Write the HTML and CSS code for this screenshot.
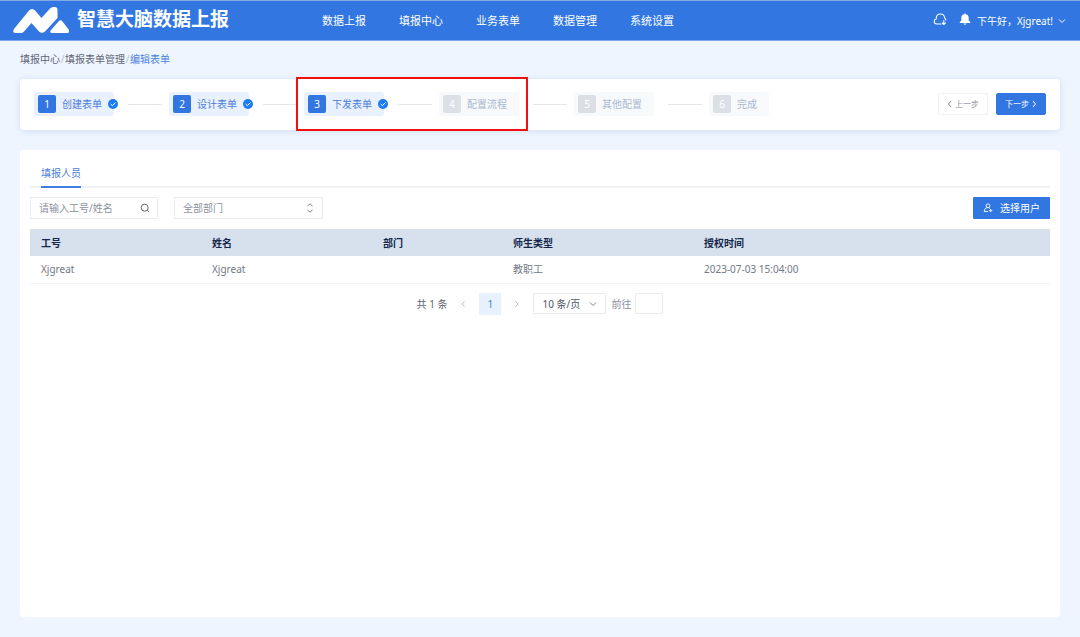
FILE: index.html
```html
<!DOCTYPE html>
<html lang="zh-CN">
<head>
<meta charset="utf-8">
<meta name="viewport" content="width=device-width, initial-scale=1">
<title>智慧大脑数据上报</title>
<link rel="stylesheet" href="styles.css">
</head>
<body>
<header class="header">
  <a class="brand" href="#">
    <svg class="brand-mark" viewBox="0 0 56 26" aria-hidden="true">
      <path d="M1 22 16 3.500Q19 .5 22 3.500L28.500 11 37 1.500Q38.500 0 40 0H42Q44.500 0 44.500 3V11L32 24.500Q29 27 26 24.500L18.500 16 11 24.500Q9.500 26 8 26H2Q-1 26 1 22Z" fill="#fff"/>
      <path d="M45.500 14.500Q47.500 12 49.500 14.500L56 23Q57 26 54 26H39Q36 26 38 23Z" fill="#fff"/>
    </svg>
    <span class="brand-name">智慧大脑数据上报</span>
  </a>
  <nav class="nav">
    <a href="#">数据上报</a>
    <a href="#">填报中心</a>
    <a href="#">业务表单</a>
    <a href="#">数据管理</a>
    <a href="#">系统设置</a>
  </nav>
  <div class="tools">
    <button class="tool glyph" type="button" aria-label="下载">
      <svg class="icon-cloud" viewBox="0 0 14 14" fill="none" stroke="#fff" stroke-width="1.100" stroke-linecap="round" stroke-linejoin="round" aria-hidden="true"><path d="M8 12H4Q1.200 12 1.200 9.500 1.200 7.500 3.200 7 3 2 7.500 2 11.300 2 11.800 6.200 12.600 6.800 12.800 8"/><path d="M10.800 8.500v4M9.300 11l1.500 1.500 1.500-1.500"/></svg>
    </button>
    <button class="tool glyph" type="button" aria-label="通知">
      <svg class="icon-bell" viewBox="0 0 12 12" fill="#fff" aria-hidden="true"><path d="M5.300 1.200V.5h1.400v.7C9 1.600 9.700 3 9.700 5v2.500L11.200 9v.9H.8V9L2.300 7.500V5C2.300 3 3 1.600 5.300 1.200ZM4.600 10.500h2.800Q7.200 11.700 6 11.700T4.600 10.500Z"/></svg>
    </button>
    <button class="tool user" type="button">
      <span>下午好，Xjgreat!</span>
      <svg class="icon-small" viewBox="0 0 8 8" fill="none" stroke="#fff" aria-hidden="true"><path d="M1 2.500 4 5.500 7 2.500"/></svg>
    </button>
  </div>
</header>

<nav class="crumbs" aria-label="面包屑">
  <a href="#">填报中心</a><span class="slash">/</span><a href="#">填报表单管理</a><span class="slash">/</span><a class="current" href="#">编辑表单</a>
</nav>

<main class="main">
  <section class="card wizard">
    <ol class="steps">
      <li class="step done"><span class="num">1</span><span>创建表单</span><svg class="check" viewBox="0 0 10 10" aria-hidden="true"><circle cx="5" cy="5" r="5" fill="#1b7cf5"/><path d="M2.700 5.100 4.400 6.700 7.500 3.600" fill="none" stroke="#fff"/></svg></li>
      <li class="step done"><span class="num">2</span><span>设计表单</span><svg class="check" viewBox="0 0 10 10" aria-hidden="true"><circle cx="5" cy="5" r="5" fill="#1b7cf5"/><path d="M2.700 5.100 4.400 6.700 7.500 3.600" fill="none" stroke="#fff"/></svg></li>
      <li class="step done"><span class="num">3</span><span>下发表单</span><svg class="check" viewBox="0 0 10 10" aria-hidden="true"><circle cx="5" cy="5" r="5" fill="#1b7cf5"/><path d="M2.700 5.100 4.400 6.700 7.500 3.600" fill="none" stroke="#fff"/></svg></li>
      <li class="step"><span class="num">4</span><span>配置流程</span></li>
      <li class="step"><span class="num">5</span><span>其他配置</span></li>
      <li class="step"><span class="num">6</span><span>完成</span></li>
    </ol>
    <div class="wizard-actions">
      <button class="btn" type="button"><svg class="icon-tiny" viewBox="0 0 6 8" fill="none" stroke="currentColor" aria-hidden="true"><path d="M4 1 1.500 4 4 7"/></svg>上一步</button>
      <button class="btn primary" type="button">下一步<svg class="icon-tiny" viewBox="0 0 6 8" fill="none" stroke="currentColor" aria-hidden="true"><path d="M2 1 4.500 4 2 7"/></svg></button>
    </div>
    <div class="highlight"></div>
  </section>

  <section class="card panel">
    <div class="tabs"><button class="tab" type="button">填报人员</button></div>
    <div class="filters">
      <div class="field search">
        <input class="control" type="text" placeholder="请输入工号/姓名" aria-label="请输入工号/姓名">
        <svg class="field-icon" viewBox="0 0 10 10" fill="none" stroke="#606672" aria-hidden="true"><circle cx="4.700" cy="4.700" r="3.500"/><path d="M7.200 7.200 9 9"/></svg>
      </div>
      <div class="field dept">
        <select class="control" aria-label="部门"><option>全部部门</option></select>
        <svg class="field-icon" viewBox="0 0 10 10" fill="none" stroke="#7c828e" aria-hidden="true"><path d="M2.500 3 5 .8 7.500 3M2.500 7 5 9.200 7.500 7"/></svg>
      </div>
      <button class="pick" type="button">
        <svg class="icon-user" viewBox="0 0 10 10" fill="none" stroke="#fff" stroke-width=".9" aria-hidden="true"><circle cx="5" cy="2.800" r="1.900"/><path d="M3.800 4.700Q1.200 5.500 1.200 8.500H5M5.700 5Q6.500 5.200 7 5.700M7.700 6v3.200M6.100 7.600h3.200"/></svg>
        选择用户
      </button>
    </div>
    <table class="table">
      <colgroup><col class="c1"><col class="c1"><col class="c2"><col class="c3"><col></colgroup>
      <thead><tr><th>工号</th><th>姓名</th><th>部门</th><th>师生类型</th><th>授权时间</th></tr></thead>
      <tbody><tr><td>Xjgreat</td><td>Xjgreat</td><td></td><td>教职工</td><td>2023-07-03 15:04:00</td></tr></tbody>
    </table>
    <div class="pager">
      <span class="total">共 1 条</span>
      <button class="page" type="button" aria-label="上一页" disabled><svg class="icon-tiny" viewBox="0 0 6 8" fill="none" stroke="#b5bac4" aria-hidden="true"><path d="M4.500 1.500 2 4 4.500 6.500"/></svg></button>
      <button class="page active" type="button">1</button>
      <button class="page" type="button" aria-label="下一页" disabled><svg class="icon-tiny" viewBox="0 0 6 8" fill="none" stroke="#b5bac4" aria-hidden="true"><path d="M1.500 1.500 4 4 1.500 6.500"/></svg></button>
      <div class="field size">
        <select class="control" aria-label="每页条数"><option>10 条/页</option></select>
        <svg class="field-icon" viewBox="0 0 10 10" fill="none" stroke="#7c828e" aria-hidden="true"><path d="M2 3.500 5 6.500 8 3.500"/></svg>
      </div>
      <label class="goto">前往<input class="control jump" type="text"></label>
    </div>
  </section>
</main>
</body>
</html>
```
FILE: styles.css
```css
* { box-sizing: border-box; }

body {
  margin: 0;
  min-height: 100vh;
  display: flex;
  flex-direction: column;
  background: #eef5ff;
  color: #606672;
  font: 10px/16px "Noto Sans", "Noto Sans CJK SC", sans-serif;
}

a { color: inherit; text-decoration: none; }
button, input, select { font: inherit; color: inherit; margin: 0; }
button { border: 0; padding: 0; background: none; cursor: pointer; white-space: nowrap; }
svg { flex: none; display: block; }

.header {
  display: flex;
  align-items: center;
  height: 41px;
  padding: 0 14px 0 13px;
  background: #3176e1;
  border-top: 1px solid #82a9e6;
  border-bottom: 1px solid #7ba7ec;
  color: #fff;
}
.brand { display: flex; align-items: center; gap: 8px; width: 309px; padding-bottom: 2px; }
.brand-mark { width: 56px; height: 26px; }
.brand-name { font-size: 19px; line-height: 24px; font-weight: 700; padding-bottom: 2px; }
.nav { display: flex; gap: 33px; font-size: 11px; }
.tools { display: flex; align-items: center; gap: 12px; margin-left: auto; }
.tool { display: flex; align-items: center; }
.glyph { padding-bottom: 4px; }
.user { gap: 5px; margin-left: -6px; }
.icon-cloud { width: 14px; height: 14px; }
.icon-bell { width: 12px; height: 12px; }
.icon-small { width: 8px; height: 8px; }
.icon-tiny { width: 6px; height: 8px; }

.crumbs { display: flex; padding: 10px 20px 12px; }
.slash { width: 5px; text-align: center; color: #b8c0cc; }
.current { color: #4a80e0; }

.main { flex: 1; display: flex; flex-direction: column; gap: 20px; padding: 0 20px 20px; }
.card { background: #fff; border-radius: 4px; }

.wizard {
  position: relative;
  display: flex;
  align-items: center;
  justify-content: space-between;
  height: 51px;
  padding: 0 14px 2px;
  box-shadow: 0 1px 6px #cfdcf2;
}
.steps { display: flex; margin: 0; padding: 0; list-style: none; }
.step {
  position: relative;
  display: flex;
  align-items: center;
  gap: 6px;
  height: 24px;
  margin-right: 55px;
  padding: 0 12px 0 4px;
  border-radius: 3px;
  background: #f8f9fb;
  color: #a9bad2;
}
.step:not(:last-child)::after {
  content: "";
  position: absolute;
  left: calc(100% + 14px);
  top: 12px;
  width: 34px;
  height: 1px;
  background: #e4e6e9;
}
.num {
  width: 18px;
  height: 18px;
  border-radius: 2px;
  background: #dcdfe6;
  color: #fff;
  line-height: 18px;
  text-align: center;
}
.done { background: #eaf1fe; color: #4a7dda; }
.done .num { background: #3176e1; }
.check { position: absolute; right: -4px; top: 7px; width: 10px; height: 10px; }

.wizard-actions { display: flex; gap: 8px; }
.btn {
  display: flex;
  align-items: center;
  justify-content: center;
  gap: 2px;
  width: 50px;
  height: 22px;
  border: 1px solid #f2f3f5;
  border-radius: 2px;
  color: #8b919c;
  font-size: 8px;
}
.primary { background: #3176e1; border-color: #3176e1; color: #fff; }
.highlight {
  position: absolute;
  left: 276px;
  top: -2px;
  width: 232px;
  height: 54px;
  border: 2px solid #f01010;
  pointer-events: none;
}

.panel { flex: 1; padding: 13px 10px; }
.tabs { height: 25px; padding: 0 11px; border-bottom: 2px solid #f1f2f4; }
.tab { height: 25px; padding-bottom: 3px; border-bottom: 2px solid #3f7ee5; color: #4a80e0; }
.filters { display: flex; gap: 16px; padding: 9px 0 10px; }
.field { position: relative; height: 22px; }
.control {
  appearance: none;
  width: 100%;
  height: 100%;
  padding: 0 8px;
  border: 1px solid #e8eaf0;
  border-radius: 1px;
  background: #fff;
  outline: 0;
  color: #8b919c;
}
.control::placeholder { color: #8b919c; opacity: 1; }
.field-icon { position: absolute; right: 8px; top: 6px; width: 10px; height: 10px; pointer-events: none; }
.search { width: 128px; }
.dept { width: 149px; }
.pick {
  display: flex;
  align-items: center;
  gap: 7px;
  height: 22px;
  margin-left: auto;
  padding: 0 10px;
  border-radius: 1px;
  background: #3176e1;
  color: #fff;
}
.icon-user { width: 10px; height: 10px; }

.table { width: 100%; table-layout: fixed; border-collapse: collapse; text-align: left; }
.c1 { width: 171px; }
.c2 { width: 130px; }
.c3 { width: 191px; }
.table th, .table td { height: 27px; padding: 0 11px; }
.table th { background: #d6e1ed; color: #14264a; font-weight: 700; }
.table td { border-bottom: 1px solid #f1f3f6; color: #727985; }

.pager { display: flex; align-items: center; justify-content: center; padding-top: 9px; }
.total { margin-right: 5px; }
.page { display: flex; align-items: center; justify-content: center; width: 22px; height: 22px; margin-right: 5px; }
.active { background: #e8f2ff; color: #4a80e0; }
.size { width: 73px; height: 21px; margin-right: 5px; }
.size .control { color: #505661; }
.goto { display: flex; align-items: center; gap: 4px; color: #8b919c; }
.jump { width: 28px; height: 21px; }
```
